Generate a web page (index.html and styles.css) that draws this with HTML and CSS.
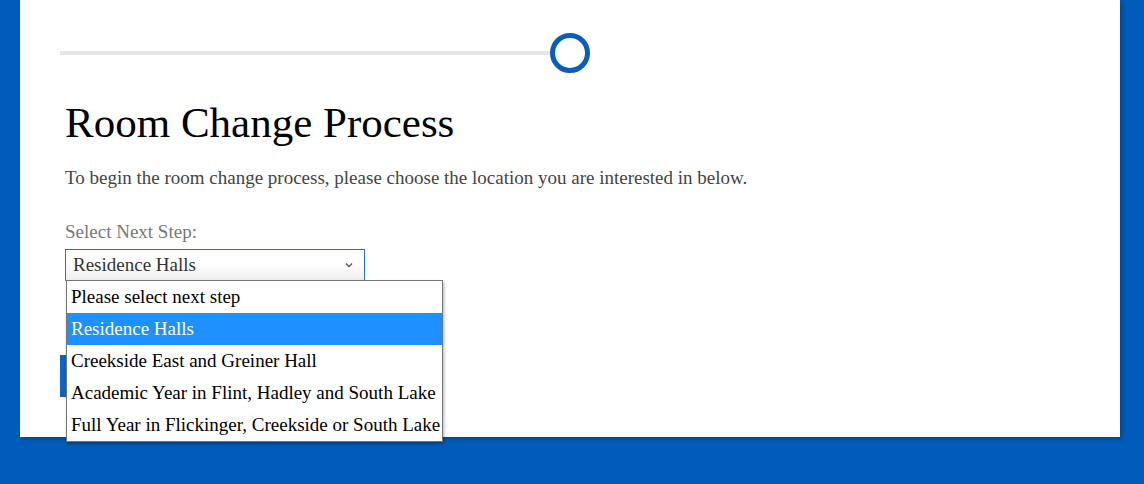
FILE: index.html
```html
<!DOCTYPE html>
<html>
<head>
<meta charset="utf-8">
<link rel="stylesheet" href="styles.css">
</head>
<body>
<div class="card">
  <div class="progress">
    <div class="track"></div>
    <div class="dot"></div>
  </div>
  <h1 class="title">Room Change Process</h1>
  <p class="intro">To begin the room change process, please choose the location you are interested in below.</p>
  <div class="field">
    <div class="label">Select Next Step:</div>
    <div class="select">
      <span class="value">Residence Halls</span>
      <svg class="chev" width="8" height="6" viewBox="0 0 8 6"><path d="M1 1.5 L4 4.5 L7 1.5" fill="none" stroke="#555" stroke-width="1.3"/></svg>
    </div>
    <div class="menu">
      <div class="opt">Please select next step</div>
      <div class="opt active">Residence Halls</div>
      <div class="opt">Creekside East and Greiner Hall</div>
      <div class="opt">Academic Year in Flint, Hadley and South Lake</div>
      <div class="opt">Full Year in Flickinger, Creekside or South Lake</div>
    </div>
    <div class="button"></div>
  </div>
</div>
</body>
</html>
```
FILE: styles.css
```css
html, body {
  margin: 0;
  padding: 0;
}
body {
  background: #005bbb;
  width: 1144px;
  height: 484px;
  overflow: hidden;
  font-family: "Liberation Serif", "Times New Roman", serif;
}
.card {
  margin-left: 20px;
  width: 1100px;
  height: 437px;
  background: #fff;
  box-shadow: 2px 2px 4px rgba(0,0,0,0.25);
  padding: 33px 40px 0 40px;
  box-sizing: border-box;
}
.progress {
  display: flex;
  align-items: center;
  width: 530px;
}
.track {
  width: 492px;
  height: 4px;
  background: #e6e6e6;
}
.dot {
  width: 30px;
  height: 30px;
  border: 5px solid #0a5ebb;
  border-radius: 50%;
  margin-left: -2px;
}
.title {
  margin: 24px 0 0 5px;
  font-size: 43px;
  font-weight: normal;
  line-height: 52px;
  color: #000;
}
.intro {
  margin: 18px 0 0 5px;
  font-size: 19px;
  line-height: 22px;
  color: #444;
}
.field {
  position: relative;
  margin: 32px 0 0 5px;
}
.label {
  font-size: 19px;
  line-height: 22px;
  color: #777;
}
.select {
  margin-top: 6px;
  width: 300px;
  height: 32px;
  box-sizing: border-box;
  border: 1px solid #1a73d0;
  border-bottom-color: #aaa;
  background: linear-gradient(#fff 45%, #eeeeee);
  display: flex;
  align-items: center;
  justify-content: space-between;
  padding: 0 11px 0 7px;
}
.value {
  font-size: 19px;
  color: #333;
}
.chev {
  display: block;
}
.button {
  margin: 74px 0 0 -5px;
  width: 120px;
  height: 42px;
  background: #0a64c8;
}
.menu {
  position: absolute;
  left: 1px;
  top: 59px;
  width: 377px;
  box-sizing: border-box;
  border: 1px solid #767676;
  background: #fff;
  box-shadow: 1px 2px 3px rgba(0,0,0,0.3);
  z-index: 2;
}
.opt {
  height: 32px;
  line-height: 32px;
  padding-left: 4px;
  font-size: 19px;
  color: #000;
  white-space: nowrap;
}
.opt.active {
  background: #1e90ff;
  color: #fff;
}
```
